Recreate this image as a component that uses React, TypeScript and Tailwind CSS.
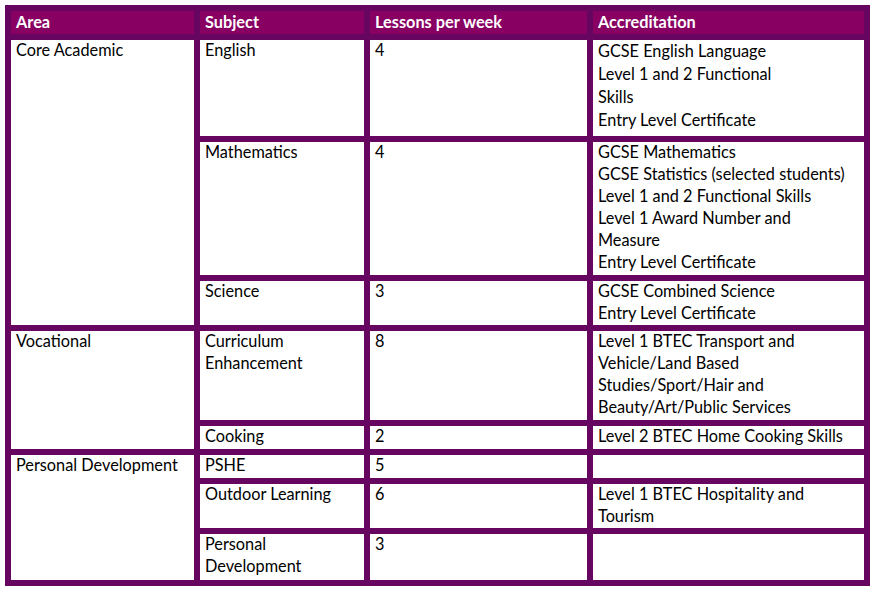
type Row = {
  subject: string[];
  lessons: string;
  accreditation: string[];
  h: string;
  tight?: boolean;
};

type Group = { area: string; rows: Row[] };

const groups: Group[] = [
  {
    area: "Core Academic",
    rows: [
      {
        subject: ["English"],
        lessons: "4",
        accreditation: [
          "GCSE English Language",
          "Level 1 and 2 Functional",
          "Skills",
          "Entry Level Certificate",
        ],
        h: "h-[96px]",
        tight: true,
      },
      {
        subject: ["Mathematics"],
        lessons: "4",
        accreditation: [
          "GCSE Mathematics",
          "GCSE Statistics (selected students)",
          "Level 1 and 2 Functional Skills",
          "Level 1 Award Number and",
          "Measure",
          "Entry Level Certificate",
        ],
        h: "h-[133px]",
      },
      {
        subject: ["Science"],
        lessons: "3",
        accreditation: ["GCSE Combined Science", "Entry Level Certificate"],
        h: "h-[44px]",
      },
    ],
  },
  {
    area: "Vocational",
    rows: [
      {
        subject: ["Curriculum", "Enhancement"],
        lessons: "8",
        accreditation: [
          "Level 1 BTEC Transport and",
          "Vehicle/Land Based",
          "Studies/Sport/Hair and",
          "Beauty/Art/Public Services",
        ],
        h: "h-[89px]",
      },
      {
        subject: ["Cooking"],
        lessons: "2",
        accreditation: ["Level 2 BTEC Home Cooking Skills"],
        h: "h-[23px]",
      },
    ],
  },
  {
    area: "Personal Development",
    rows: [
      { subject: ["PSHE"], lessons: "5", accreditation: [], h: "h-[23px]" },
      {
        subject: ["Outdoor Learning"],
        lessons: "6",
        accreditation: ["Level 1 BTEC Hospitality and", "Tourism"],
        h: "h-[44px]",
      },
      {
        subject: ["Personal", "Development"],
        lessons: "3",
        accreditation: [],
        h: "h-[46px]",
      },
    ],
  },
];

function Lines({ lines, tight }: { lines: string[]; tight?: boolean }) {
  return (
    <div className={tight ? "-mt-px leading-[23px]" : "-mt-px leading-[22px]"}>
      {lines.map((l) => (
        <div key={l} className="whitespace-nowrap">
          {l}
        </div>
      ))}
    </div>
  );
}

export default function App() {
  return (
    <div className="min-h-screen bg-white p-[5px] font-['Lato','Noto_Sans',sans-serif] text-[16.3px] text-black">
      <div className="inline-flex flex-col gap-[6px] bg-[#660660] p-[6px]">
        <div className="flex gap-[6px] font-bold text-white">
          <div className="h-[23px] w-[183px] bg-[#870062] px-[5px] leading-[22px]">Area</div>
          <div className="h-[23px] w-[164px] bg-[#870062] px-[5px] leading-[22px]">Subject</div>
          <div className="h-[23px] w-[217px] bg-[#870062] px-[5px] leading-[22px]">
            Lessons per week
          </div>
          <div className="h-[23px] w-[271px] bg-[#870062] px-[5px] leading-[22px]">
            Accreditation
          </div>
        </div>
        {groups.map((g) => (
          <div key={g.area} className="flex gap-[6px]">
            <div className="w-[183px] bg-white px-[5px]">
              <Lines lines={[g.area]} />
            </div>
            <div className="flex flex-col gap-[6px]">
              {g.rows.map((r) => (
                <div key={r.subject.join(" ")} className={`flex gap-[6px] ${r.h}`}>
                  <div className="w-[164px] bg-white px-[5px]">
                    <Lines lines={r.subject} />
                  </div>
                  <div className="w-[217px] bg-white px-[5px]">
                    <Lines lines={[r.lessons]} />
                  </div>
                  <div className="w-[271px] bg-white px-[5px]">
                    <Lines lines={r.accreditation} tight={r.tight} />
                  </div>
                </div>
              ))}
            </div>
          </div>
        ))}
      </div>
    </div>
  );
}
